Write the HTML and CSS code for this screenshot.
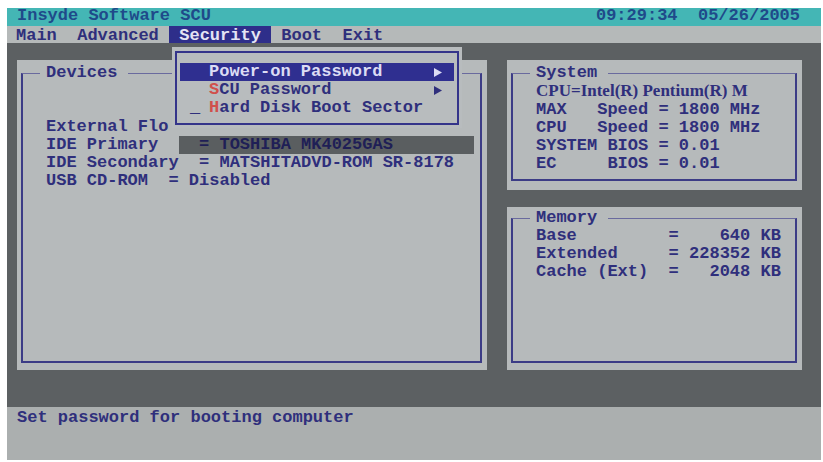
FILE: index.html
```html
<!DOCTYPE html>
<html lang="en">
<head>
    <meta charset="UTF-8">
    <meta name="viewport" content="width=device-width, initial-scale=1.0">
    <title>Insyde Software SCU</title>
    <link rel="stylesheet" href="styles.css">
</head>
<body>
    <div class="screen">
        <div class="titlebar">
            <span>Insyde Software SCU</span>
            <span>09:29:34  05/26/2005</span>
        </div>

        <div class="menubar"><span class="menu-item">Main  Advanced </span><span class="menu-item active"> Security <div class="popup">
                <div class="popup-frame">
                    <div class="popup-row selected"><span class="mark"></span><span class="label">Power-on Password</span><span class="arrow"><svg width="8" height="9" viewBox="0 0 8 9"><path d="M0 0 L8 4.5 L0 9 Z" fill="currentColor"/></svg></span></div>
                    <div class="popup-row"><span class="mark"></span><span class="label"><b class="hot">S</b>CU Password</span><span class="arrow"><svg width="8" height="9" viewBox="0 0 8 9"><path d="M0 0 L8 4.5 L0 9 Z" fill="currentColor"/></svg></span></div>
                    <div class="popup-row"><span class="mark">_</span><span class="label"><b class="hot">H</b>ard Disk Boot Sector</span></div>
                </div>
            </div></span><span class="menu-item"> Boot  Exit</span></div>

        <div class="main">
            <div class="panel panel-devices">
                <fieldset class="frame">
                    <legend>Devices</legend>
                    <div class="rows rows-devices">External Flo
IDE Primary  <span class="selbar">  = TOSHIBA MK4025GAS</span>
IDE Secondary  = MATSHITADVD-ROM SR-8178
USB CD-ROM  = Disabled</div>
                </fieldset>
            </div>

            <div class="side">
                <div class="panel panel-system">
                    <fieldset class="frame">
                        <legend>System</legend>
                        <div class="rows"><span class="serif">CPU=Intel(R) Pentium(R) M</span>
MAX   Speed = 1800 MHz
CPU   Speed = 1800 MHz
SYSTEM BIOS = 0.01
EC     BIOS = 0.01</div>
                    </fieldset>
                </div>

                <div class="panel panel-memory">
                    <fieldset class="frame">
                        <legend>Memory</legend>
                        <div class="rows">Base         =    640 KB
Extended     = 228352 KB
Cache (Ext)  =   2048 KB</div>
                    </fieldset>
                </div>
            </div>
        </div>

        <div class="status">Set password for booting computer</div>
    </div>
</body>
</html>
```

FILE: styles.css
```css
body {
    margin: 0;
    background-color: #ffffff;
    font-family: "Liberation Mono", "DejaVu Sans Mono", monospace;
    font-weight: bold;
    font-size: 17px;
    line-height: 18px;
    color: #2f2f7c;
}
.screen {
    margin: 8px 2px 0 7px;
    height: 452px;
    display: flex;
    flex-direction: column;
}
.titlebar {
    height: 18px;
    line-height: 16px;
    padding: 0 21px 0 10px;
    background-color: #44b6b5;
    color: #1f4a8a;
    display: flex;
    justify-content: space-between;
    white-space: pre;
}
.menubar {
    height: 16px;
    line-height: 17px;
    padding: 1px 0 0 9px;
    background-color: #b5b9b9;
    white-space: pre;
    display: flex;
}
.menu-item {
    display: block;
}
.menu-item.active {
    position: relative;
    margin-top: -1px;
    padding-top: 1px;
    background-color: #2e2e8a;
    color: #e4e4f4;
}
.popup {
    position: absolute;
    left: 3px;
    top: 21px;
    width: 284px;
    padding: 4px 3px 3px 3px;
    background-color: #b8bcbe;
    color: #2f2f7c;
    line-height: 18px;
    white-space: normal;
    z-index: 2;
}
.popup-frame {
    border: 2px solid #34348a;
    padding: 10px 3px 6px 3px;
}
.popup-row {
    display: flex;
    align-items: center;
    height: 18px;
    white-space: pre;
}
.popup-row.selected {
    background-color: #2f2f90;
    color: #dcdcf4;
}
.mark {
    width: 29px;
    padding-left: 10px;
    box-sizing: border-box;
}
.label {
    flex: 1;
}
.hot {
    color: #d0504c;
}
.arrow {
    width: 20px;
    display: flex;
}
.main {
    flex: 1;
    background-color: #5c6062;
    display: flex;
    gap: 20px;
    padding: 17px 19px 37px 10px;
}
.panel {
    background-color: #b6babb;
    display: flex;
    padding: 4px 5px 7px 4px;
}
.panel-devices {
    width: 470px;
    box-sizing: border-box;
}
.side {
    flex: 1;
    display: flex;
    flex-direction: column;
    gap: 17px;
}
.panel-system {
    height: 130px;
    box-sizing: border-box;
    padding-bottom: 9px;
}
.panel-memory {
    flex: 1;
    padding-top: 2px;
}
.frame {
    flex: 1;
    margin: 0;
    min-width: 0;
    padding: 0 0 0 23px;
    border-style: solid;
    border-color: #6a6a9e #3c3c86 #3c3c86 #3c3c86;
    border-width: 1px 2px 2px 2px;
}
.frame legend {
    padding: 0 11px 0 6px;
    margin-left: -6px;
    line-height: 18px;
}
.rows {
    white-space: pre;
}
.rows-devices {
    padding-top: 36px;
}
.selbar {
    display: inline-block;
    width: 295px;
    background-color: #5a5e60;
    color: #1f1f56;
}
.serif {
    font-family: "Liberation Serif", "DejaVu Serif", serif;
    font-size: 17px;
}
.status {
    height: 53px;
    background-color: #abafaf;
    padding-left: 10px;
    padding-top: 2px;
    box-sizing: border-box;
    white-space: pre;
}
```
